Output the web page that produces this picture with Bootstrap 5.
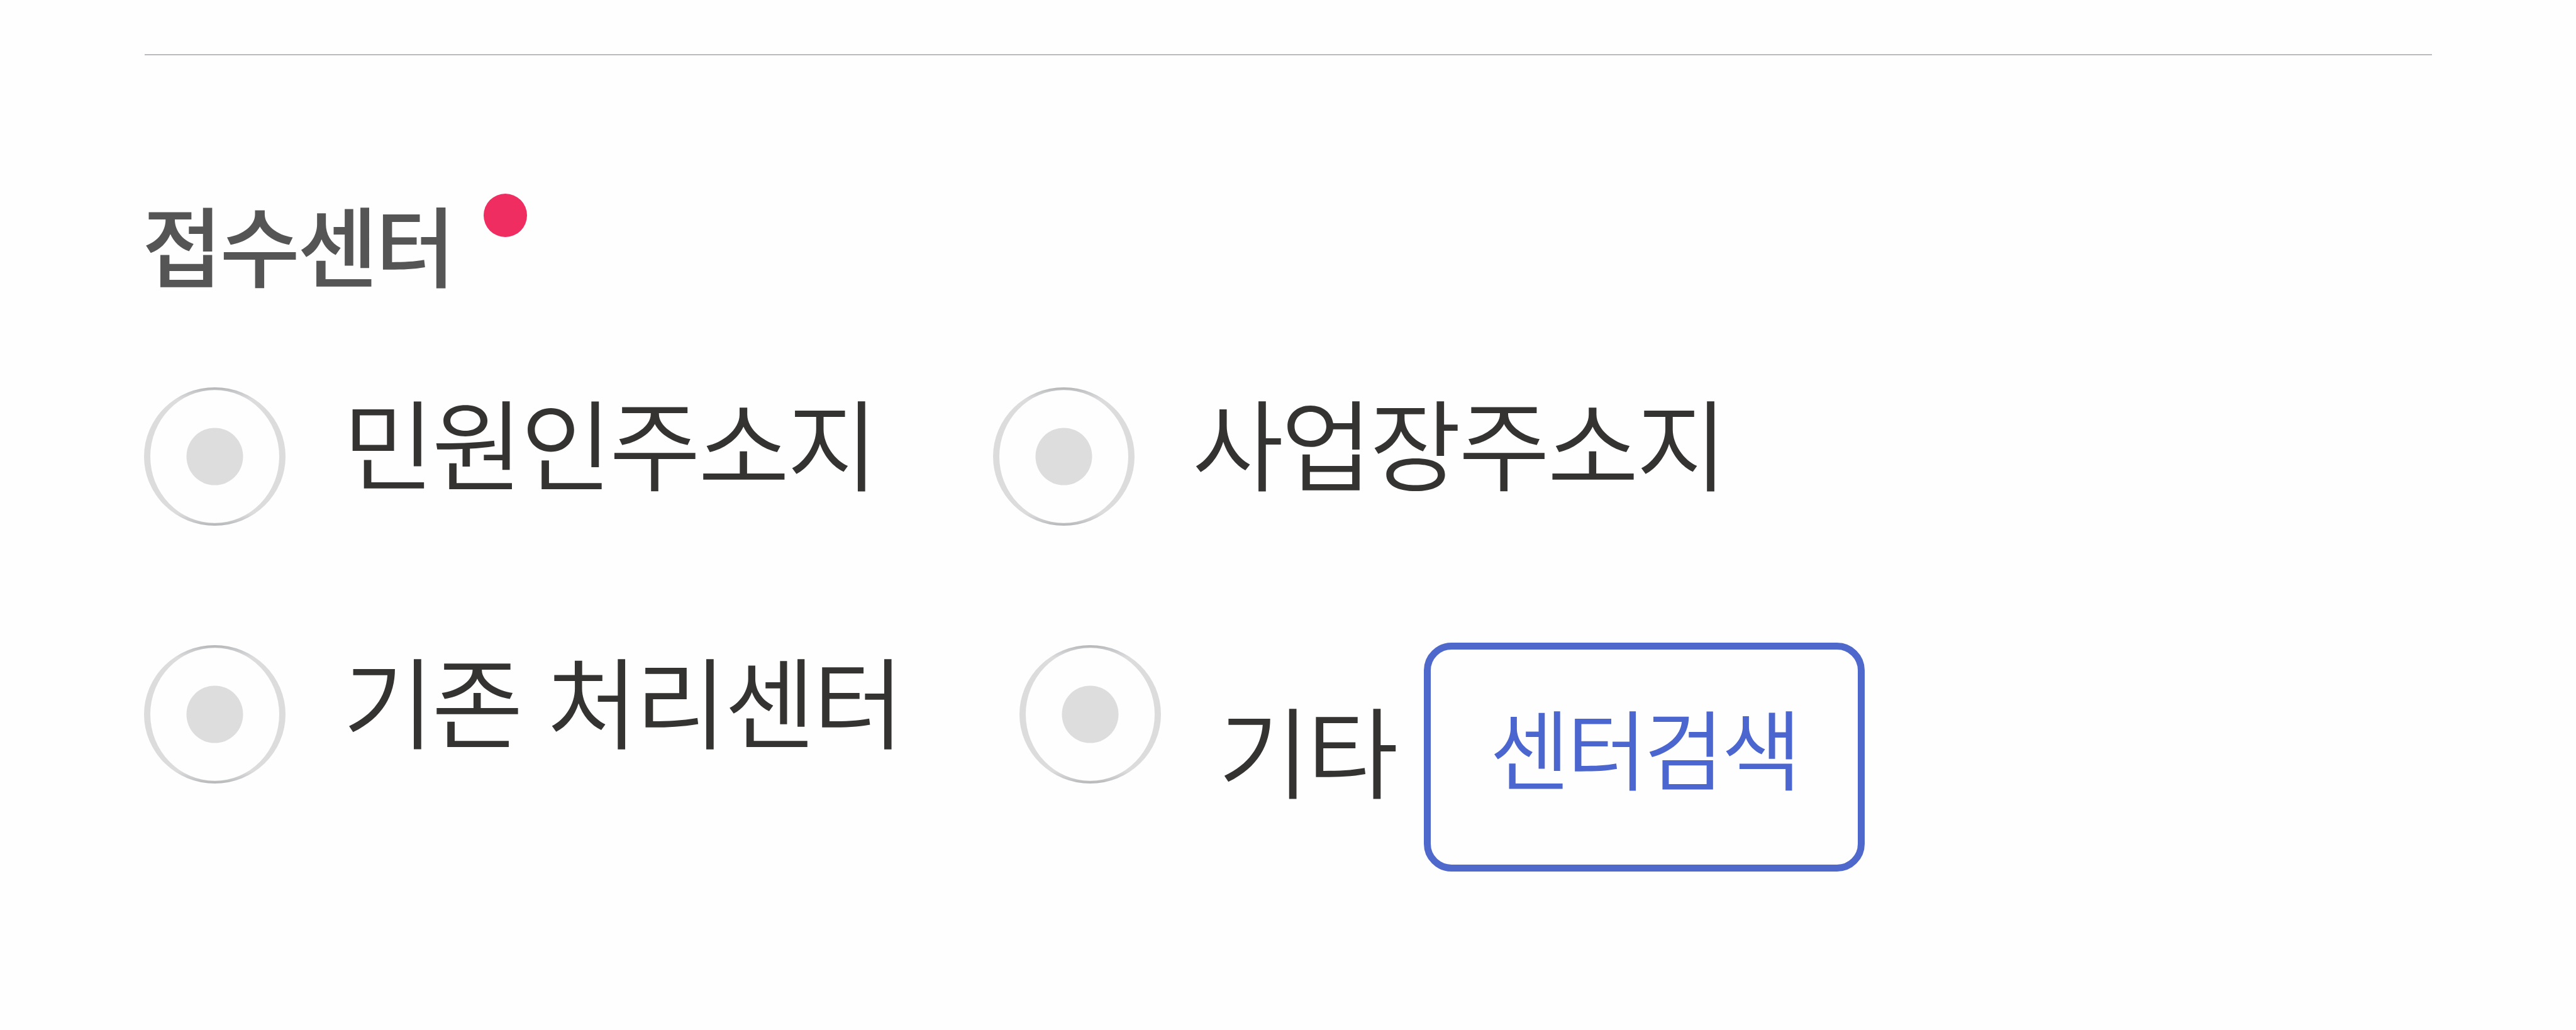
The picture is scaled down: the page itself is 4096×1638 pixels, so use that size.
<!DOCTYPE html>
<html lang="ko">
<head>
  <meta charset="UTF-8" />
  <title>접수센터</title>
  <meta name="viewport" content="width=device-width, initial-scale=1" />
  <link rel="stylesheet" href="https://cdn.jsdelivr.net/npm/bootstrap@5.3.0/dist/css/bootstrap.min.css" />
  <style>
    body {
      background: #fefefe;
      color: #343332;
      font-family: "Noto Sans CJK KR", sans-serif;
      font-weight: 350;
      overflow: hidden;
    }

    .center-form {
      padding: 86px 229px 0;
    }

    .section-line {
      width: 3637px;
      height: 2px;
      margin-left: 1px;
      background: #b9babf;
    }

    .title-row {
      padding-top: 197px;
    }

    .field-title {
      margin: 0 0 0 -3px;
      color: #555;
      font-size: 138.7px;
      font-weight: 500;
      line-height: 201px;
      letter-spacing: -4px;
    }

    .required-dot {
      width: 69px;
      height: 69px;
      margin: 23px 0 0 49px;
      background: #ef2d60;
    }

    .option-list {
      margin-top: 104px;
    }

    .option-row {
      height: 410px;
      gap: 187px;
    }

    .option-item {
      gap: 91px;
      font-size: 158.3px;
      line-height: 220px;
      letter-spacing: -4.4px;
      word-spacing: 1.5px;
    }

    .option-radio {
      width: 225px;
      height: 220px;
      margin-top: 26px;
    }

    .option-etc {
      margin-top: 79px;
    }

    .btn-center {
      --bs-btn-color: #4c66cf;
      --bs-btn-border-color: #4f68cb;
      --bs-btn-border-width: 11px;
      --bs-btn-border-radius: 44px;
      --bs-btn-font-size: 139px;
      --bs-btn-font-weight: 350;
      --bs-btn-line-height: 201px;
      width: 701px;
      margin: 22px 0 0 -46px;
      padding: 52px 0 89px 93px;
      letter-spacing: -5px;
    }
  </style>
</head>
<body>
  <svg class="position-absolute" width="0" height="0">
    <linearGradient id="ringShade" x1="0" y1="0" x2="0" y2="1">
      <stop offset="0" stop-color="#b4b5b7" />
      <stop offset=".03" stop-color="#c6c7c9" />
      <stop offset=".09" stop-color="#dcdcdd" />
      <stop offset=".91" stop-color="#dcdcdd" />
      <stop offset=".97" stop-color="#c6c7c9" />
      <stop offset="1" stop-color="#b4b5b7" />
    </linearGradient>
    <symbol id="radio" viewBox="0 0 225 220">
      <path fill="url(#ringShade)" fill-rule="evenodd" d="M0 110a112.5 110 0 0 1 225 0a112.5 110 0 0 1-225 0zM10 110a102.5 105.8 0 0 0 205 0a102.5 105.8 0 0 0-205 0z" />
      <ellipse cx="112.5" cy="110" rx="45" ry="45.6" fill="#ddd" />
    </symbol>
  </svg>

  <form class="center-form">
    <div class="section-line"></div>

    <div class="title-row d-flex align-items-start">
      <h2 class="field-title text-nowrap">접수센터</h2>
      <span class="required-dot rounded-circle"></span>
    </div>

    <div class="option-list">
      <div class="option-row d-flex align-items-start">
        <label class="option-item d-flex align-items-start text-nowrap">
          <svg class="option-radio flex-shrink-0"><use href="#radio" /></svg>
          <span>민원인주소지</span>
        </label>
        <label class="option-item d-flex align-items-start text-nowrap">
          <svg class="option-radio flex-shrink-0"><use href="#radio" /></svg>
          <span>사업장주소지</span>
        </label>
      </div>
      <div class="option-row d-flex align-items-start">
        <label class="option-item d-flex align-items-start text-nowrap">
          <svg class="option-radio flex-shrink-0"><use href="#radio" /></svg>
          <span>기존 처리센터</span>
        </label>
        <div class="option-item d-flex align-items-start text-nowrap">
          <svg class="option-radio flex-shrink-0"><use href="#radio" /></svg>
          <span class="option-etc">기타</span>
          <button type="button" class="btn btn-center text-start flex-shrink-0">센터검색</button>
        </div>
      </div>
    </div>
  </form>

  <script src="https://cdn.jsdelivr.net/npm/bootstrap@5.3.0/dist/js/bootstrap.bundle.min.js"></script>
</body>
</html>
